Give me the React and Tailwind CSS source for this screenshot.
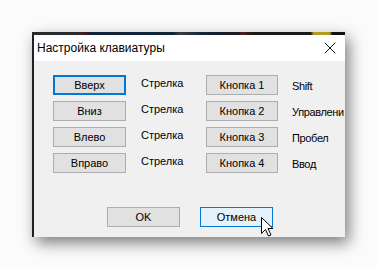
import { X } from 'lucide-react';

const rows = [
  { left: 'Вверх', leftLabel: 'Стрелка', right: 'Кнопка 1', rightLabel: 'Shift', focused: true },
  { left: 'Вниз', leftLabel: 'Стрелка', right: 'Кнопка 2', rightLabel: 'Управлени' },
  { left: 'Влево', leftLabel: 'Стрелка', right: 'Кнопка 3', rightLabel: 'Пробел' },
  { left: 'Вправо', leftLabel: 'Стрелка', right: 'Кнопка 4', rightLabel: 'Ввод' },
];

function WinButton({ children, focused, hover, width = 'w-[73px]' }) {
  let look = 'border border-[#adadad] bg-[#e1e1e1]';
  if (focused) look = 'border-2 border-[#0078d7] bg-[#e1e1e1]';
  if (hover) look = 'border border-[#0078d7] bg-[#e5f1fb]';
  return (
    <div className={`${width} h-[20px] shrink-0 flex items-center justify-center text-[11px] leading-[13px] text-black ${look}`}>
      {children}
    </div>
  );
}

function Cursor() {
  return (
    <svg className="absolute left-[261px] top-[217px]" width="13" height="20" viewBox="0 0 13 20">
      <path
        d="M0.5 0.5 L0.5 16.5 L4.5 12.5 L7.5 19 L10 18 L7 11.5 L12 11.5 Z"
        fill="#fff"
        stroke="#000"
        strokeWidth="1"
        strokeLinejoin="miter"
      />
    </svg>
  );
}

export default function App() {
  return (
    <div className="relative w-[377px] h-[269px] bg-[#fbfbfb] overflow-hidden pt-[32px] pl-[32px] font-['Liberation_Sans',Arial,sans-serif]">
      <div className="w-[313px] h-[205px] flex flex-col bg-[#f0f0f0] shadow-[4px_6px_14px_rgba(0,0,0,0.5)] overflow-hidden">
        <div className="h-[3px] shrink-0 bg-[linear-gradient(90deg,#2b2b2b_0%,#2b2b2b_15%,#4a1c1c_16%,#102338_19%,#102338_45%,#3a3a3a_47%,#102338_55%,#1a1a1a_66%,#5a1c1c_67%,#1a1a1a_70%,#1a1a1a_89%,#b59b1e_90%,#b59b1e_95%,#111_96%)]" />
        <div className="flex-1 flex border-l-2 border-[#1f1f28]">
          <div className="flex-1 flex flex-col">
            <div className="h-[26px] shrink-0 bg-white flex items-center justify-between pl-[3px] pr-[5px]">
              <span className="text-[12px] leading-[15px] text-black">Настройка клавиатуры</span>
              <X size={20} strokeWidth={1.1} className="text-black" />
            </div>
            <div className="flex-1 flex flex-col pt-[14px] pl-[19px]">
              <div className="flex flex-col gap-[6px]">
                {rows.map((row) => (
                  <div key={row.left} className="flex items-start">
                    <WinButton focused={row.focused}>{row.left}</WinButton>
                    <div className="w-[80px] shrink-0 pl-[15px] pt-[2px] text-[11px] leading-[13px] text-black">
                      {row.leftLabel}
                    </div>
                    <WinButton width="w-[72px]">{row.right}</WinButton>
                    <div className="ml-[14px] pt-[5px] text-[11px] leading-[13px] tracking-[-0.35px] text-black whitespace-nowrap">
                      {row.rightLabel}
                    </div>
                  </div>
                ))}
              </div>
              <div className="flex gap-[20px] mt-[34px] pl-[54px]">
                <WinButton>OK</WinButton>
                <WinButton hover>Отмена</WinButton>
              </div>
            </div>
          </div>
        </div>
      </div>
      <Cursor />
    </div>
  );
}
